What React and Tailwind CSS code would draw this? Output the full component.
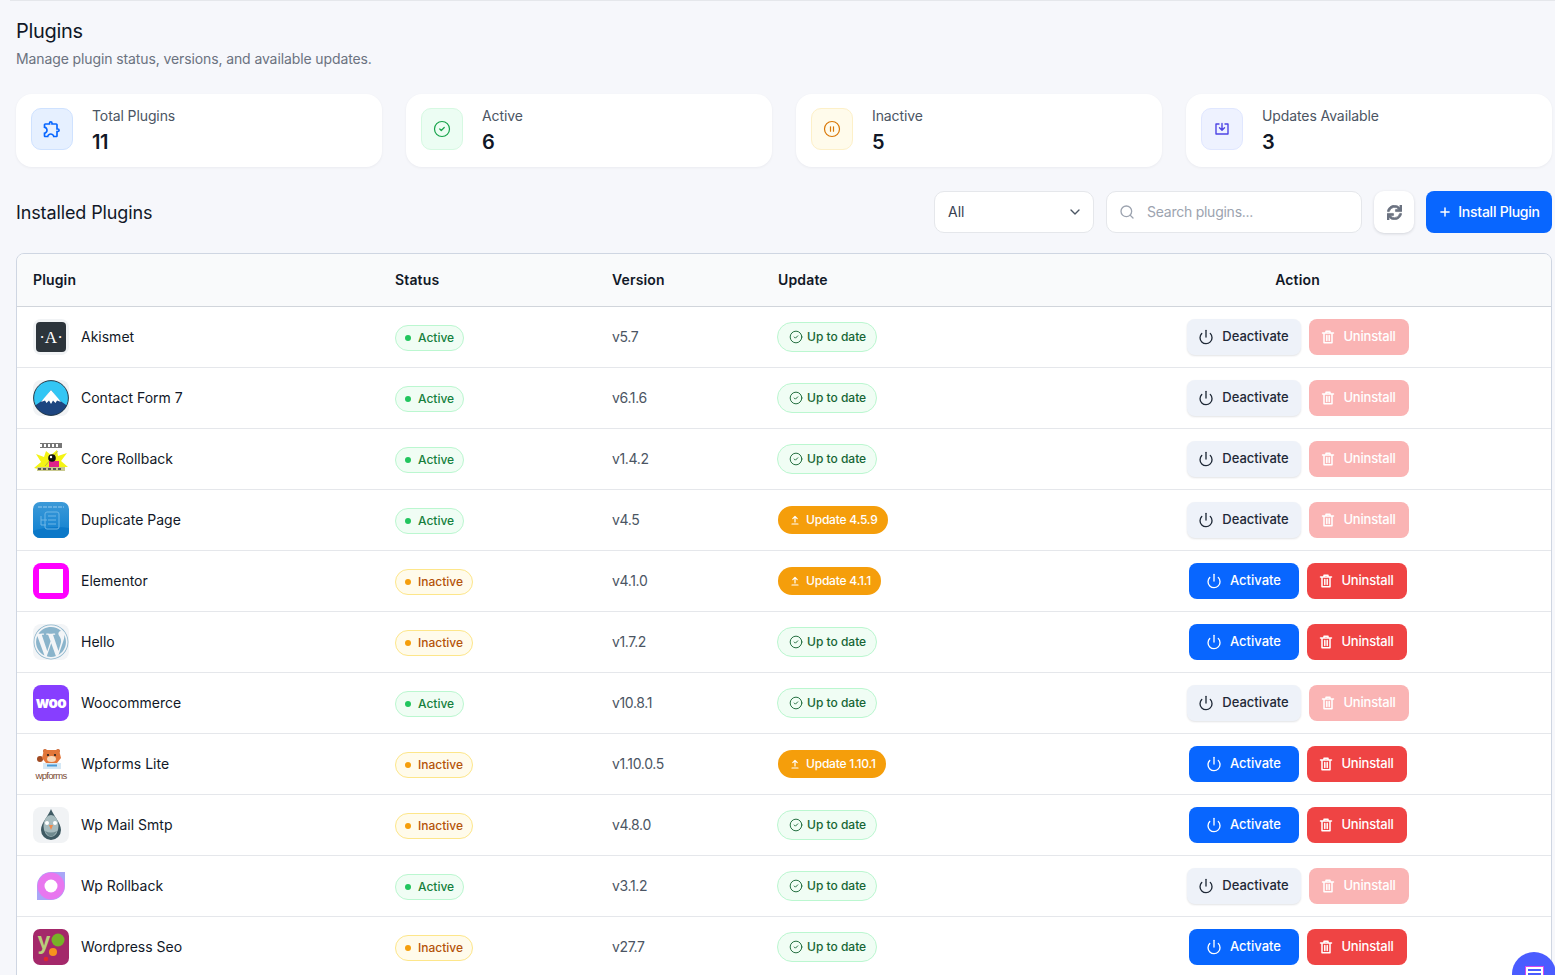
import { CircleCheck, CirclePause, Plus, Power, Search, ChevronDown } from 'lucide-react';
import { MdOutlineExtension } from 'react-icons/md';
import { FaSync, FaWordpress } from 'react-icons/fa';

const rows = [
  { name: 'Akismet', active: true, version: 'v5.7', logo: 'akismet' },
  { name: 'Contact Form 7', active: true, version: 'v6.1.6', logo: 'cf7' },
  { name: 'Core Rollback', active: true, version: 'v1.4.2', logo: 'core' },
  { name: 'Duplicate Page', active: true, version: 'v4.5', update: '4.5.9', logo: 'dup' },
  { name: 'Elementor', active: false, version: 'v4.1.0', update: '4.1.1', logo: 'elementor' },
  { name: 'Hello', active: false, version: 'v1.7.2', logo: 'hello' },
  { name: 'Woocommerce', active: true, version: 'v10.8.1', logo: 'woo' },
  { name: 'Wpforms Lite', active: false, version: 'v1.10.0.5', update: '1.10.1', logo: 'wpforms' },
  { name: 'Wp Mail Smtp', active: false, version: 'v4.8.0', logo: 'smtp' },
  { name: 'Wp Rollback', active: true, version: 'v3.1.2', logo: 'rollback' },
  { name: 'Wordpress Seo', active: false, version: 'v27.7', logo: 'seo' },
];

const GRID = 'grid grid-cols-[362px_217px_166px_282px_1fr] items-center';

function Logo({ type }) {
  if (type === 'akismet') return (
    <div className="w-9 h-9 rounded-lg bg-[#f1f3f5] flex items-center justify-center">
      <div className="w-[30px] h-[30px] rounded-[4px] bg-[#2c343b] flex items-center justify-center text-white text-[17px] leading-none font-['Liberation_Serif',serif]">·A·</div>
    </div>
  );
  if (type === 'cf7') return (
    <svg viewBox="0 0 36 36" className="w-9 h-9">
      <rect width="36" height="36" rx="8" fill="#f1f3f5" />
      <clipPath id="cf7c"><circle cx="18" cy="18" r="17.4" /></clipPath>
      <g clipPath="url(#cf7c)">
        <rect width="36" height="36" fill="#33c6f4" />
        <path d="M0 27 L10 20 L18 10 L26 20 L36 27 V36 H0Z" fill="#1d4580" />
        <path d="M18 10 L24 17 L28 22 L24 20.5 L22.5 23 L20 20.5 L18 24 L16 20.5 L13.5 23 L12 20.5 L8 22 L12 17Z" fill="#fff" />
      </g>
      <circle cx="18" cy="18" r="17.4" fill="none" stroke="#1f2a37" strokeWidth="0.9" />
    </svg>
  );
  if (type === 'core') return (
    <svg viewBox="0 0 36 36" className="w-9 h-9">
      <rect x="7" y="2" width="22" height="5" fill="#777" />
      <path d="M7 3h2v3H7zM11 3h2v3h-2zM15 3h2v3h-2zM19 3h2v3h-2zM23 3h2v3h-2z" fill="#fff" />
      <path d="M1 27 L8 21 L3 13 L11 16 L13 10 L18 14 L24 9 L25 15 L34 12 L28 20 L35 26 L27 26 L24 29 L10 29Z" fill="#f4f414" />
      <path d="M16 20 L26 20 L26 27 L16 27Z" fill="#e0218a" />
      <path d="M12 25 L25 10" stroke="#777" strokeWidth="0.5" />
      <circle cx="19" cy="17" r="3.8" fill="#111" />
      <circle cx="18" cy="16" r="1.2" fill="#fff" />
      <rect x="4" y="26" width="28" height="4" fill="#c9c98f" />
      <path d="M5 27h3v2H5zM10 27h3v2h-3zM15 27h3v2h-3zM20 27h3v2h-3zM25 27h3v2h-3z" fill="#555" />
    </svg>
  );
  if (type === 'dup') return (
    <svg viewBox="0 0 36 36" className="w-9 h-9">
      <defs><linearGradient id="dupg" x1="0" y1="0" x2="0" y2="1"><stop offset="0" stopColor="#3d9ad8" /><stop offset="1" stopColor="#0d7fd0" /></linearGradient></defs>
      <rect width="36" height="36" rx="7" fill="url(#dupg)" />
      <path d="M0 29 Q18 23 36 26 V29 a7 7 0 0 1 -7 7 H7 a7 7 0 0 1 -7 -7Z" fill="#0b78c8" />
      <g fill="none" stroke="#6fb6e6" strokeWidth="1">
        <rect x="12" y="10" width="14" height="17" rx="2" />
        <path d="M15 14h8M15 18h8M15 22h8" />
        <path d="M8 14v9h5M8 18h6" />
      </g>
      <path d="M5 5h26" stroke="#79bbe8" strokeWidth="1.6" strokeDasharray="4 1" />
    </svg>
  );
  if (type === 'elementor') return (
    <div className="w-9 h-9 rounded-lg bg-[#f0f] flex items-center justify-center">
      <div className="w-6 h-6 bg-white" />
    </div>
  );
  if (type === 'hello') return (
    <div className="w-9 h-9 rounded-lg bg-[#f3f5f7] flex items-center justify-center">
      <FaWordpress size={36} className="text-[#8ab4cb]" />
    </div>
  );
  if (type === 'woo') return (
    <div className="w-9 h-9 rounded-lg bg-[#873eff] flex items-center justify-center">
      <span className="text-white text-[15px] font-black leading-none font-['Inter',sans-serif] tracking-[-0.6px] mb-[2px]">woo</span>
    </div>
  );
  if (type === 'wpforms') return (
    <svg viewBox="0 0 36 36" className="w-9 h-9">
      <circle cx="12" cy="5" r="2" fill="#c8602a" />
      <circle cx="25" cy="5" r="2" fill="#c8602a" />
      <circle cx="7" cy="13" r="3" fill="#a04a22" />
      <path d="M11 4 H26 L28 12 L24 17 H13 L9 12Z" fill="#e2763a" />
      <ellipse cx="18.500" cy="13" rx="4.500" ry="3" fill="#f7d8bb" />
      <circle cx="15" cy="9" r="1.100" fill="#222" />
      <circle cx="22" cy="9" r="1.100" fill="#222" />
      <path d="M10 17 H28 V23 H10Z" fill="#d5e8f5" />
      <path d="M14 18.500h10v2H14z" fill="#4a9ad4" />
      <text x="18" y="33" textAnchor="middle" fontSize="9.500" fill="#7a4a32" fontFamily="Liberation Sans, sans-serif" letterSpacing="-0.7">wpforms</text>
    </svg>
  );
  if (type === 'smtp') return (
    <svg viewBox="0 0 36 36" className="w-9 h-9">
      <rect width="36" height="36" rx="8" fill="#f1f3f5" />
      <path d="M18 2 C20 8 28 16 28 23 A10 10 0 0 1 8 23 C8 16 16 8 18 2Z" fill="#3f5a63" />
      <ellipse cx="18" cy="19" rx="7.500" ry="11" fill="#a8bcbf" />
      <path d="M12 24 Q18 35 24 24 Q18 27 12 24Z" fill="#6f8a8f" />
      <circle cx="14" cy="16" r="2" fill="#fff" />
      <circle cx="22" cy="16" r="2" fill="#fff" />
      <path d="M16 18 H20 L18 23Z" fill="#f08a4b" />
    </svg>
  );
  if (type === 'rollback') return (
    <svg viewBox="0 0 36 36" className="w-9 h-9">
      <path d="M18 4 H32 V18 A14 14 0 0 1 18 32 H4 V18 A14 14 0 0 1 18 4Z" fill="#a9a6f7" />
      <circle cx="18" cy="18" r="13.500" fill="#e877ef" />
      <circle cx="18" cy="18" r="6.500" fill="#fff" />
    </svg>
  );
  return (
    <svg viewBox="0 0 36 36" className="w-9 h-9">
      <rect width="36" height="36" rx="7" fill="#a4286a" />
      <circle cx="25" cy="11" r="6.500" fill="#77b227" />
      <circle cx="20" cy="23" r="4" fill="#f7941d" />
      <circle cx="13" cy="30" r="2.300" fill="#e0282c" />
      <text x="11" y="20" textAnchor="middle" fontSize="23" fontWeight="700" fill="#b9cf7a" fontFamily="Liberation Sans, sans-serif">y</text>
    </svg>
  );
}

function TrashIcon() {
  return (
    <svg viewBox="0 0 14 14" className="w-[14px] h-[14px]" fill="none" stroke="currentColor" strokeWidth="1.5" strokeLinecap="round" strokeLinejoin="round">
      <path d="M1.500 3h11M5 3V1.200h4V3M3 3v9.800h8V3M5.800 5.500v5M8.200 5.500v5" />
    </svg>
  );
}

function UploadIcon() {
  return (
    <svg viewBox="0 0 12 12" className="w-3 h-3" fill="none" stroke="currentColor" strokeWidth="1.2" strokeLinecap="round" strokeLinejoin="round">
      <path d="M6 8V2.500M3.800 4.600 6 2.400l2.200 2.200M3 10h6" />
    </svg>
  );
}

function StatCard({ icon, boxClass, label, value }) {
  return (
    <div className="bg-white rounded-2xl h-[73px] flex items-start pt-[14px] pl-[15px] gap-[19px] shadow-[0_1px_3px_rgba(17,24,39,0.05)]">
      <div className={`w-[42px] h-[42px] rounded-[10px] border flex items-center justify-center ${boxClass}`}>{icon}</div>
      <div className="-mt-[2px]">
        <div className="text-sm leading-5 text-[#4b5563] mb-[4px] tracking-[-0.1px]">{label}</div>
        <div className="text-xl leading-6 font-semibold text-[#111827] tracking-[-0.5px]">{value}</div>
      </div>
    </div>
  );
}

function Row({ row }) {
  return (
    <div className={`${GRID} h-[61px] border-b border-[#e5e7eb] bg-white`}>
      <div className="pl-4 flex items-center gap-3">
        <Logo type={row.logo} />
        <span className="text-sm text-[#111827]">{row.name}</span>
      </div>
      <div className="pl-4">
        {row.active ? (
          <span className="inline-flex items-center gap-[7px] h-[26px] px-[9px] rounded-full border border-[#bbf7d0] bg-[#f0fdf4] text-xs font-medium text-[#15803d] mt-[2px]">
            <span className="w-[6px] h-[6px] rounded-full bg-[#22c55e]" />Active
          </span>
        ) : (
          <span className="inline-flex items-center gap-[7px] h-[26px] px-[9px] rounded-full border border-[#fde68a] bg-[#fffbeb] text-xs font-medium text-[#b45309] mt-[2px]">
            <span className="w-[6px] h-[6px] rounded-full bg-[#f59e0b]" />Inactive
          </span>
        )}
      </div>
      <div className="pl-4 text-sm text-[#4b5563] tracking-[-0.35px]">{row.version}</div>
      <div className="pl-4 flex">
        {row.update ? (
          <span className="inline-flex items-center gap-[5px] h-7 pl-[11px] pr-[10px] rounded-full bg-[#f59e0b] text-xs font-medium text-white tracking-[-0.2px]">
            <UploadIcon />Update {row.update}
          </span>
        ) : (
          <span className="inline-flex items-center gap-1 h-[30px] pl-[11px] pr-[10px] -ml-px rounded-full border border-[#bbf7d0] bg-[#f0fdf4] text-xs font-medium text-[#166534]">
            <CircleCheck size={14} strokeWidth={1.6} />Up to date
          </span>
        )}
      </div>
      <div className="flex items-center justify-center gap-2">
        {row.active ? (
          <>
            <button className="w-[114px] h-9 rounded-lg bg-[#eef2f9] shadow-[0_1px_2px_rgba(17,24,39,0.12)] text-[13px] font-medium text-[#1f2937] flex items-center justify-center gap-2">
              <Power size={16} strokeWidth={2} />Deactivate
            </button>
            <button className="w-[100px] h-9 rounded-lg bg-[#fab4b4] text-[13px] font-medium text-white flex items-center justify-center gap-2 tracking-[-0.2px]">
              <TrashIcon />Uninstall
            </button>
          </>
        ) : (
          <>
            <button className="w-[110px] h-9 rounded-lg bg-[#0866ff] text-[13px] font-medium text-white flex items-center justify-center gap-2">
              <Power size={16} strokeWidth={2} />Activate
            </button>
            <button className="w-[100px] h-9 rounded-lg bg-[#ef4444] text-[13px] font-medium text-white flex items-center justify-center gap-2 tracking-[-0.2px]">
              <TrashIcon />Uninstall
            </button>
          </>
        )}
      </div>
    </div>
  );
}

export default function App() {
  return (
    <div className="relative h-[975px] overflow-hidden bg-[#f6f7fb] font-['Inter',sans-serif]">
      <div className="ml-[10px] h-px bg-[#e5e7eb]" />
      <div className="pl-4 pr-[3px]">
        <h1 className="mt-[18px] text-xl leading-[24px] text-[#111827] tracking-[-0.3px]">Plugins</h1>
        <p className="mt-[6px] text-sm leading-5 text-[#6b7280] tracking-[-0.11px]">Manage plugin status, versions, and available updates.</p>

        <div className="mt-[25px] grid grid-cols-4 gap-6">
          <StatCard icon={<MdOutlineExtension size={20} className="text-[#0866ff]" />} boxClass="bg-[#e6f0ff] border-[#cfe2ff]" label="Total Plugins" value="11" />
          <StatCard icon={<CircleCheck size={18} strokeWidth={1.6} className="text-[#16a34a]" />} boxClass="bg-[#ecfdf3] border-[#d6f9e2]" label="Active" value="6" />
          <StatCard icon={<CirclePause size={18} strokeWidth={1.6} className="text-[#d97706]" />} boxClass="bg-[#fffbeb] border-[#fdf0c8]" label="Inactive" value="5" />
          <StatCard icon={
            <svg viewBox="0 0 16 16" className="w-4 h-4 text-[#4f46e5]" fill="none" stroke="currentColor" strokeWidth="1.4" strokeLinejoin="round" strokeLinecap="round">
              <path d="M5 3H2v10h12V3h-3M8 2.500V9M5.500 6.800 8 9.300l2.500-2.500" />
            </svg>
          } boxClass="bg-[#eef2ff] border-[#e0e7ff]" label="Updates Available" value="3" />
        </div>

        <div className="mt-[24px] flex items-center h-[42px]">
          <h2 className="text-lg text-[#111827] flex-1 tracking-[-0.12px] mt-px">Installed Plugins</h2>
          <div className="w-[160px] h-[42px] rounded-[10px] border border-[#e5e7eb] bg-white flex items-center justify-between pl-[13px] pr-[10px] text-sm text-[#374151]">
            All <ChevronDown size={16} className="text-[#4b5563]" />
          </div>
          <div className="ml-3 w-[256px] h-[42px] rounded-[10px] border border-[#e5e7eb] bg-white flex items-center gap-3 pl-3 text-sm text-[#9ca3af] tracking-[-0.25px]">
            <Search size={16} />Search plugins...
          </div>
          <button className="ml-3 w-10 h-[42px] rounded-[10px] bg-white shadow-[0_1px_3px_rgba(17,24,39,0.15)] flex items-center justify-center text-[#6b7280]">
            <FaSync size={15} stroke="currentColor" strokeWidth={24} />
          </button>
          <button className="ml-3 w-[126px] h-[42px] rounded-lg bg-[#0866ff] text-sm font-medium text-white flex items-center justify-center gap-[6px] tracking-[-0.25px]">
            <Plus size={14} strokeWidth={2.5} />Install Plugin
          </button>
        </div>

        <div className="mt-[20px] border border-[#cfd6e2] rounded-t-lg overflow-hidden">
          <div className={`${GRID} h-[53px] bg-[#f9fafb] border-b border-[#d1d5db] text-sm font-semibold text-[#111827] tracking-[0.15px]`}>
            <div className="pl-4">Plugin</div>
            <div className="pl-4">Status</div>
            <div className="pl-4">Version</div>
            <div className="pl-4">Update</div>
            <div className="text-center">Action</div>
          </div>
          {rows.map((row) => <Row key={row.name} row={row} />)}
        </div>
      </div>

      <div className="absolute right-[-1px] top-[952px] w-11 h-11 rounded-full bg-[#4a5cff] flex justify-center pt-[14px]">
        <div className="w-[19px] h-[15px] bg-white border border-[#d946ef] flex flex-col gap-[2px] pt-[2px] px-[2px]">
          <div className="h-[2px] bg-[#4a5cff]" />
          <div className="h-[2px] bg-[#4a5cff]" />
        </div>
      </div>
    </div>
  );
}
